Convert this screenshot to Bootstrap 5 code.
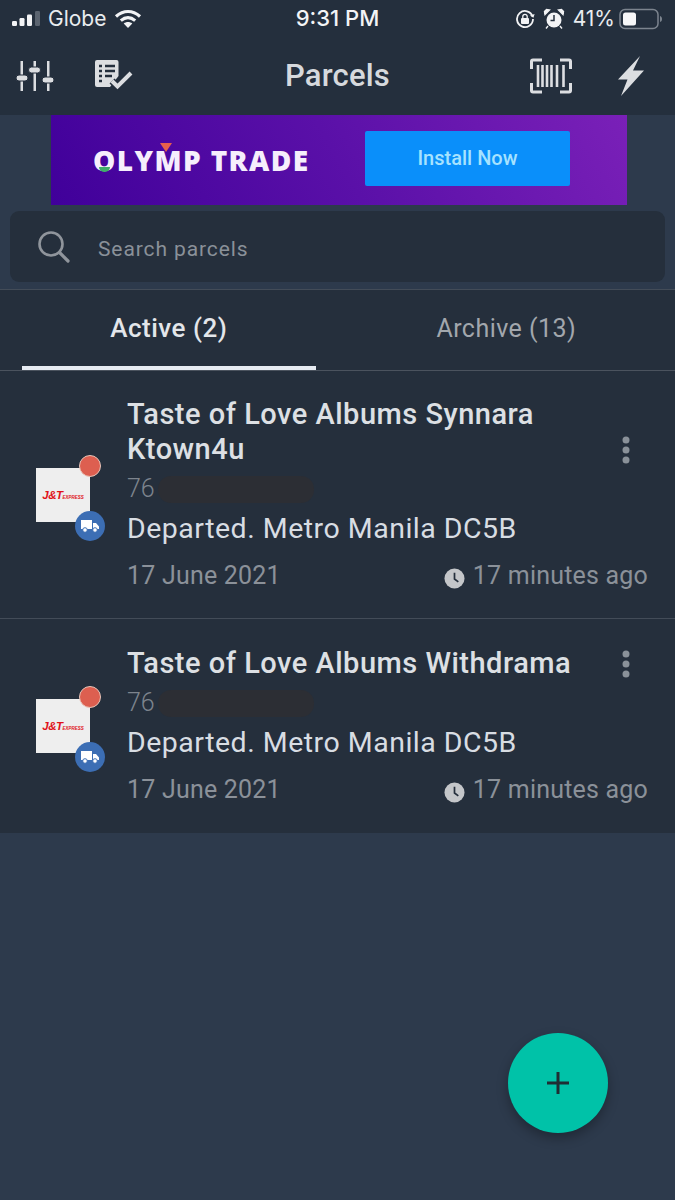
<!DOCTYPE html>
<html lang="en">

<head>
    <meta charset="UTF-8">
    <meta name="viewport" content="width=device-width, initial-scale=1.0">
    <title>Parcels</title>
    <link href="https://cdn.jsdelivr.net/npm/bootstrap@5.3.0/dist/css/bootstrap.min.css" rel="stylesheet">
    <style>
        html, body { height: 100%; }
        body { background: #2d3a4c; font-family: Roboto, "Liberation Sans", sans-serif; color: #dfe3e8; overflow: hidden; }
        .app-top { background: #242f3d; height: 115px; }
        .status-bar { display: grid; grid-template-columns: 1fr auto 1fr; height: 37px; padding: 0 12px; font-family: Inter, "Liberation Sans", sans-serif; font-size: 21px; color: #e9ecef; }
        .status-time { font-size: 22px; font-weight: 500; color: #f3f4f6; }
        .tool-bar { display: grid; grid-template-columns: 1fr auto 1fr; height: 78px; padding: 0 16px; }
        .tool-title { font-size: 31px; font-weight: 500; color: #d6d9dd; margin: 0; line-height: 76px; letter-spacing: .2px; }
        .tool-right { margin-right: 15px; }
        .ad-banner { width: 576px; height: 90px; margin-left: 51px; background: linear-gradient(60deg, #40009a, #5a10a8 50%, #7a20b8); }
        .ad-logo { width: 314px; padding-left: 42px; font-family: "Open Sans", "Liberation Sans", sans-serif; font-size: 28px; font-weight: 800; color: #f6eefc; letter-spacing: 1.4px; white-space: nowrap; }
        .logo-o, .logo-m { position: relative; }
        .logo-o::after { content: ""; position: absolute; left: 6px; bottom: 7px; width: 11px; height: 5px; background: #3fae6a; border-radius: 0 0 6px 6px; }
        .logo-m::after { content: ""; position: absolute; left: 6px; top: 2px; border: 6px solid transparent; border-top: 9px solid #e8604c; border-bottom: 0; }
        .ad-btn { width: 205px; height: 55px; margin-top: -4px; background: #0a8ffa; color: #a6e2ff; font-size: 20px; font-weight: 500; border-radius: 2px; }
        .search-box { margin: 6px 10px 7px; height: 71px; background: #252f3c; border-radius: 9px; padding-left: 28px; }
        .search-text { margin-left: 28px; padding-top: 6px; font-size: 21px; letter-spacing: .9px; color: #8a9199; }
        .tab-strip { background: #252f3c; height: 82px; border-top: 1px solid #434c58; border-bottom: 1px solid #4b535e; }
        .tab-item { width: 50%; position: relative; text-align: center; font-size: 25px; line-height: 77px; color: #a2a7ad; letter-spacing: .45px; }
        .tab-item.is-on { color: #e3e6ea; font-size: 26px; font-weight: 500; letter-spacing: .5px; line-height: 76px; }
        .tab-item.is-on::after { content: ""; position: absolute; left: 22px; right: 22px; bottom: 0; height: 4px; background: #e6ebf2; }
        .parcel-list { background: #252f3c; }
        .parcel-row { padding: 26px 18px 22px 36px; border-bottom: 1px solid #434c58; }
        .parcel-row:last-child { padding-top: 27px; padding-bottom: 23px; border-bottom: 0; }
        .logo-wrap { position: relative; width: 54px; height: 54px; margin-top: -4px; margin-right: 37px; flex: none; background: #eeeeee; }
        .jt-text { color: #e0131a; font: italic 800 11.5px "Liberation Sans", sans-serif; letter-spacing: -.5px; white-space: nowrap; }
        .jt-text span { font-size: 4.5px; font-weight: 700; letter-spacing: 0; }
        .dot-red { position: absolute; top: -13px; right: -11px; width: 22px; height: 22px; border-radius: 50%; background: #dd5f50; border: 1px solid #e8c4b8; }
        .dot-truck { position: absolute; bottom: -19px; right: -15px; width: 30px; height: 30px; border-radius: 50%; background: #3c6eb4; }
        .parcel-name { font-size: 29px; font-weight: 500; line-height: 35px; color: #dde0e4; margin: 0; width: 482px; letter-spacing: .5px; }
        .menu-dots { width: 34px; height: 34px; flex: none; }
        .parcel-num { margin-top: 2px; height: 40px; font-size: 25px; font-weight: 300; color: #7d848d; line-height: 40px; }
        .num-mask { width: 156px; height: 27px; margin-left: 3px; background: #2c2e34; border-radius: 13px; }
        .parcel-status { font-size: 28.5px; line-height: 40px; color: #d8dde3; letter-spacing: .5px; white-space: nowrap; }
        .parcel-date { margin-top: 7px; line-height: 40px; font-size: 25px; color: #8b9199; padding-right: 9px; letter-spacing: .2px; }
        .add-fab { position: fixed; left: 508px; top: 1033px; width: 100px; height: 100px; border-radius: 50%; background: #00c2a8; border: 0; padding: 0; box-shadow: 0 5px 12px rgba(0, 0, 0, .3); }
    </style>
</head>

<body>
    <div class="app-top">
        <div class="status-bar align-items-center">
            <div class="d-flex align-items-center">
                <svg width="28" height="16" viewBox="0 0 28 16"><rect x="0" y="10" width="5" height="5" rx="1.2" fill="#f2f3f5"/><rect x="7.5" y="7" width="5" height="8" rx="1.2" fill="#f2f3f5"/><rect x="15" y="3.5" width="5" height="11.5" rx="1.2" fill="#f2f3f5"/><rect x="23" y="0" width="5" height="15" rx="1.2" fill="#5b6470"/></svg>
                <span class="ms-2">Globe</span>
                <svg class="ms-2" width="28" height="20" viewBox="0 0 28 20"><path d="M2 7.5C9.5 .8 18.5 .8 26 7.5" fill="none" stroke="#f2f3f5" stroke-width="3.2"/><path d="M6.8 11.6c4.6-3.9 9.8-3.9 14.4 0" fill="none" stroke="#f2f3f5" stroke-width="3.2"/><path d="M14 19l-4.3-4.5c2.6-2 6-2 8.6 0z" fill="#f2f3f5"/></svg>
            </div>
            <div class="status-time">9:31 PM</div>
            <div class="d-flex align-items-center justify-content-end">
                <svg width="20" height="20" viewBox="0 0 20 20"><path d="M17.6 7.5A8 8 0 1 0 18 10" fill="none" stroke="#f2f3f5" stroke-width="1.8"/><path d="M15 6.5l3.4 2.2 1.2-3.6z" fill="#f2f3f5"/><rect x="6" y="9" width="8" height="6" rx="1" fill="#f2f3f5"/><path d="M7.8 9V7.5a2.2 2.2 0 0 1 4.4 0V9" fill="none" stroke="#f2f3f5" stroke-width="1.3"/></svg>
                <svg class="ms-2" width="22" height="22" viewBox="0 0 22 22"><circle cx="11" cy="12" r="7.5" fill="#f2f3f5"/><path d="M11 7v5.5H7.5" fill="none" stroke="#242f3d" stroke-width="1.5"/><path d="M2 6.5L6.5 2 3.5 1.5 1.5 3.5zM20 6.5L15.500 2l3-.5 2 2zM5 18l-2 2.500M17 18l2 2.500" fill="#f2f3f5" stroke="#f2f3f5" stroke-width="1.400"/></svg>
                <span class="ms-2">41%</span>
                <div class="ms-1 d-flex align-items-center">
                    <svg width="44" height="22" viewBox="0 0 44 22"><rect x="1" y="1.500" width="38" height="19" rx="5" fill="none" stroke="#7c848e" stroke-width="1.500"/><rect x="4" y="4.500" width="13" height="13" rx="2.500" fill="#f7f7f8"/><path d="M41 8v6c1.500-.5 2-1.500 2-3s-.5-2.500-2-3z" fill="#7c848e"/></svg>
                </div>
            </div>
        </div>
        <div class="tool-bar align-items-center">
            <div class="d-flex align-items-center">
                <svg width="38" height="32" viewBox="0 0 38 32" fill="#dcdee1"><rect x="4.500" y="1" width="2.500" height="30"/><rect x="17.500" y="1" width="2.500" height="30"/><rect x="31" y="1" width="2.500" height="30"/><rect x="0" y="15" width="12" height="6" rx="3" stroke="#242f3d"/><rect x="12.500" y="7" width="12" height="6" rx="3" stroke="#242f3d"/><rect x="26" y="17" width="12" height="6" rx="3" stroke="#242f3d"/></svg>
                <svg style="margin-left:41px" width="38" height="32" viewBox="0 0 38 32"><path d="M2 0h19.500a2 2 0 0 1 2 2v14L15 27H2a2 2 0 0 1-2-2V2a2 2 0 0 1 2-2z" fill="#dcdee1"/><path d="M4 6h3M10 6h10M4 11h3M10 11h10M4 16h3M10 16h7M4 21h3" stroke="#242f3d" stroke-width="2.500"/><path d="M17 21l5.500 5.500L36 13" fill="none" stroke="#242f3d" stroke-width="7"/><path d="M17 21l5.500 5.500L36 13" fill="none" stroke="#dcdee1" stroke-width="4"/></svg>
            </div>
            <h1 class="tool-title">Parcels</h1>
            <div class="tool-right d-flex align-items-center justify-content-end">
                <svg width="42" height="36" viewBox="0 0 42 36" fill="none"><path d="M12 2H3a1.500 1.500 0 0 0-1.500 1.500V11M30 2h9a1.500 1.500 0 0 1 1.500 1.500V11M12 34H3a1.500 1.500 0 0 1-1.500-1.500V25M30 34h9a1.500 1.500 0 0 0 1.500-1.500V25" stroke="#dcdee1" stroke-width="3"/><path d="M8 7v22M12.500 7v22M17 7v22M21.500 7v22M27 7v22M33.500 7v22" stroke="#dcdee1" stroke-width="2.600"/></svg>
                <svg style="margin-left:46px" width="26" height="40" viewBox="0 0 26 40"><path d="M22 0L0 23.500h9.500L3 40l23-25.500H15z" fill="#dcdee1"/></svg>
            </div>
        </div>
    </div>

    <div class="ad-banner d-flex align-items-center">
        <div class="ad-logo"><span class="logo-o">O</span>LY<span class="logo-m">M</span>P TRADE</div>
        <div class="ad-btn d-flex align-items-center justify-content-center">Install Now</div>
    </div>

    <div class="search-box d-flex align-items-center">
        <svg width="32" height="32" viewBox="0 0 32 32" fill="none" stroke="#90959c"><circle cx="13" cy="13" r="11.500" stroke-width="2.600"/><path d="M21.500 21.500L30 30" stroke-width="3.200" stroke-linecap="round"/></svg>
        <span class="search-text">Search parcels</span>
    </div>

    <div class="tab-strip d-flex">
        <div class="tab-item is-on">Active (2)</div>
        <div class="tab-item">Archive (13)</div>
    </div>

    <div class="parcel-list">
        <div class="parcel-row d-flex align-items-center">
            <div class="logo-wrap d-flex align-items-center justify-content-center">
                <div class="jt-text">J&amp;T<span>EXPRESS</span></div>
                <span class="dot-red"></span>
                <span class="dot-truck d-flex align-items-center justify-content-center">
                    <svg width="18" height="14" viewBox="0 0 18 14" fill="#fff"><path d="M0 1h11v9H0zM12 4h3l3 3.500V10h-6z"/><circle cx="4" cy="11" r="2.300" stroke="#3c6eb4"/><circle cx="14" cy="11" r="2.300" stroke="#3c6eb4"/></svg>
                </span>
            </div>
            <div class="flex-grow-1">
                <div class="d-flex align-items-end">
                    <h2 class="parcel-name">Taste of Love Albums Synnara Ktown4u</h2>
                    <div class="menu-dots d-flex align-items-center justify-content-center">
                        <svg width="8" height="28" viewBox="0 0 8 28" fill="#8a9199"><circle cx="4" cy="4" r="3.500"/><circle cx="4" cy="14" r="3.500"/><circle cx="4" cy="24" r="3.500"/></svg>
                    </div>
                </div>
                <div class="parcel-num d-flex align-items-center">76<span class="num-mask"></span></div>
                <div class="parcel-status">Departed. Metro Manila DC5B</div>
                <div class="parcel-date d-flex justify-content-between">
                    <span>17 June 2021</span>
                    <span class="d-flex align-items-center gap-2">
                        <svg class="mt-1" width="21" height="21" viewBox="0 0 22 22"><circle cx="11" cy="11" r="10.500" fill="#c4c6c9"/><path d="M11 5v6.500l4 3" fill="none" stroke="#252f3c" stroke-width="1.800"/></svg>
                        17 minutes ago
                    </span>
                </div>
            </div>
        </div>
        <div class="parcel-row d-flex align-items-center">
            <div class="logo-wrap d-flex align-items-center justify-content-center">
                <div class="jt-text">J&amp;T<span>EXPRESS</span></div>
                <span class="dot-red"></span>
                <span class="dot-truck d-flex align-items-center justify-content-center">
                    <svg width="18" height="14" viewBox="0 0 18 14" fill="#fff"><path d="M0 1h11v9H0zM12 4h3l3 3.500V10h-6z"/><circle cx="4" cy="11" r="2.300" stroke="#3c6eb4"/><circle cx="14" cy="11" r="2.300" stroke="#3c6eb4"/></svg>
                </span>
            </div>
            <div class="flex-grow-1">
                <div class="d-flex align-items-end">
                    <h2 class="parcel-name">Taste of Love Albums Withdrama</h2>
                    <div class="menu-dots d-flex align-items-center justify-content-center">
                        <svg width="8" height="28" viewBox="0 0 8 28" fill="#8a9199"><circle cx="4" cy="4" r="3.500"/><circle cx="4" cy="14" r="3.500"/><circle cx="4" cy="24" r="3.500"/></svg>
                    </div>
                </div>
                <div class="parcel-num d-flex align-items-center">76<span class="num-mask"></span></div>
                <div class="parcel-status">Departed. Metro Manila DC5B</div>
                <div class="parcel-date d-flex justify-content-between">
                    <span>17 June 2021</span>
                    <span class="d-flex align-items-center gap-2">
                        <svg class="mt-1" width="21" height="21" viewBox="0 0 22 22"><circle cx="11" cy="11" r="10.500" fill="#c4c6c9"/><path d="M11 5v6.500l4 3" fill="none" stroke="#252f3c" stroke-width="1.800"/></svg>
                        17 minutes ago
                    </span>
                </div>
            </div>
        </div>
    </div>

    <button class="add-fab d-flex align-items-center justify-content-center" type="button" aria-label="Add parcel">
        <svg width="24" height="24" viewBox="0 0 24 24"><path d="M12 1v22M1 12h22" stroke="#1f2d33" stroke-width="3"/></svg>
    </button>

    <script src="https://cdn.jsdelivr.net/npm/bootstrap@5.3.0/dist/js/bootstrap.bundle.min.js"></script>
</body>

</html>
